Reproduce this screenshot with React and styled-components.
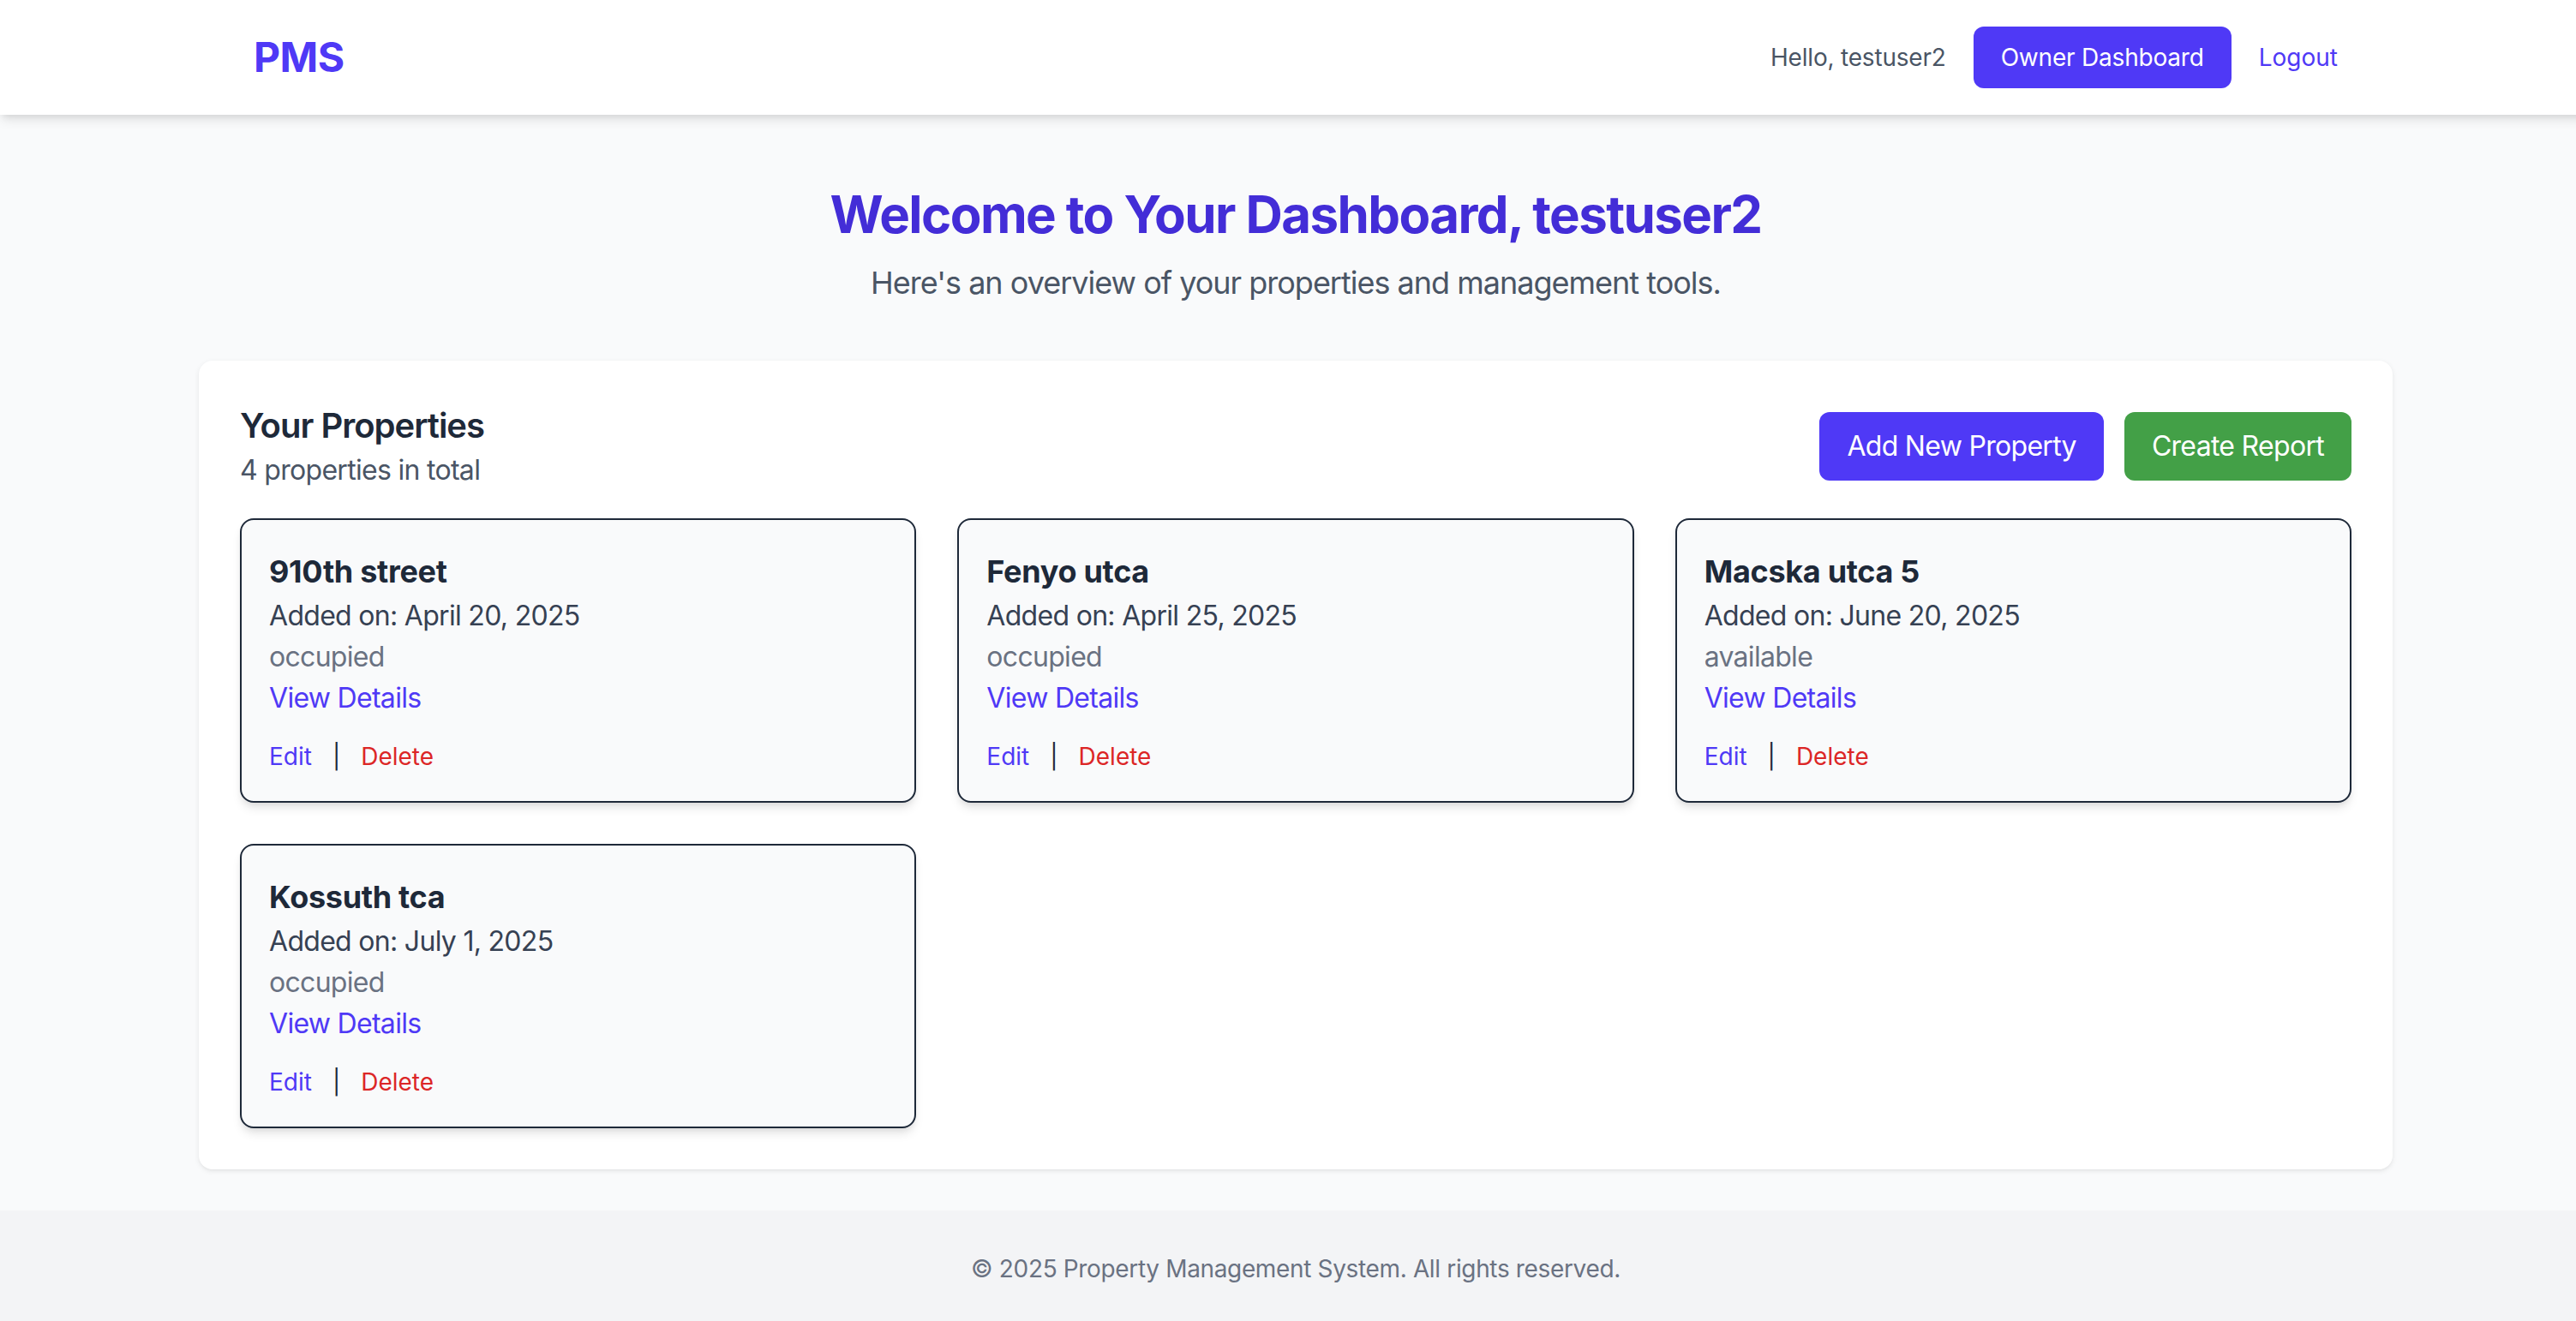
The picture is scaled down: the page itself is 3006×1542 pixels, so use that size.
import React from "react";
import styled, { createGlobalStyle } from "styled-components";

// The reference was captured from a 3024px wide layout and cropped to 3006px,
// so the page is laid out at 3024px and the overflow is hidden.
const GlobalStyle = createGlobalStyle`
  html, body {
    margin: 0;
    padding: 0;
    overflow: hidden;
  }
  body {
    font-family: Inter, "Noto Sans", "Liberation Sans", sans-serif;
    background-color: #f9fafb;
    color: #1e2939;
  }
  * {
    box-sizing: border-box;
  }
`;

const Page = styled.div`
  width: 3024px;
  min-height: 100vh;
  display: flex;
  flex-direction: column;
  background-color: #f9fafb;
`;

// Header
const Header = styled.header`
  background-color: #fff;
  box-shadow: 0 8px 12px -2px rgba(0, 0, 0, 0.1), 0 4px 8px -4px rgba(0, 0, 0, 0.1);
  position: relative;
  z-index: 1;
`;

const HeaderInner = styled.div`
  width: 2560px;
  margin: 0 auto;
  height: 134px;
  padding: 0 64px;
  display: flex;
  align-items: center;
  justify-content: space-between;
`;

const Logo = styled.div`
  font-size: 48px;
  line-height: 64px;
  font-weight: 700;
  letter-spacing: -0.5px;
  color: #4f39f6;
`;

const Nav = styled.nav`
  display: flex;
  align-items: center;
  gap: 32px;
`;

const Greeting = styled.span`
  font-size: 28px;
  line-height: 40px;
  letter-spacing: -0.2px;
  color: #4a5565;
`;

const NavButton = styled.button`
  font-family: inherit;
  font-size: 28px;
  line-height: 40px;
  letter-spacing: -0.2px;
  padding: 16px 32px;
  border: none;
  border-radius: 12px;
  background-color: #4f39f6;
  color: #fff;
  cursor: pointer;
`;

const NavLink = styled.a`
  font-size: 28px;
  line-height: 40px;
  color: #4f39f6;
  text-decoration: none;
  cursor: pointer;
`;

// Main
const Main = styled.main`
  flex: 1;
  padding: 80px 0 48px;
`;

const Intro = styled.section`
  text-align: center;
  margin-bottom: 63px;
`;

const Heading = styled.h1`
  margin: 0 0 16px;
  font-size: 60px;
  line-height: 72px;
  font-weight: 700;
  letter-spacing: -1.6px;
  color: #432dd7;
`;

const Subtitle = styled.p`
  margin: 0;
  font-size: 36px;
  line-height: 56px;
  letter-spacing: -1px;
  color: #4a5565;
`;

const Panel = styled.section`
  width: 2560px;
  margin: 0 auto;
  padding: 48px;
  background-color: #fff;
  border-radius: 16px;
  box-shadow: 0 2px 6px rgba(0, 0, 0, 0.08), 0 2px 4px -2px rgba(0, 0, 0, 0.06);
`;

const PanelHead = styled.div`
  display: flex;
  align-items: center;
  justify-content: space-between;
  margin-bottom: 32px;
`;

const PanelTitle = styled.h2`
  margin: 0;
  font-size: 40px;
  line-height: 56px;
  font-weight: 600;
  letter-spacing: -1px;
  color: #1e2939;
`;

const PanelCount = styled.p`
  margin: 0;
  font-size: 32px;
  line-height: 48px;
  letter-spacing: -0.7px;
  color: #4a5565;
`;

const Actions = styled.div`
  display: flex;
  gap: 24px;
`;

const ActionButton = styled.button`
  font-family: inherit;
  font-size: 32px;
  line-height: 48px;
  letter-spacing: -0.7px;
  padding: 16px 32px;
  border: none;
  border-radius: 12px;
  color: #fff;
  background-color: ${(p) => (p.$variant === "green" ? "#43a047" : "#4f39f6")};
  cursor: pointer;
`;

const Grid = styled.div`
  display: grid;
  grid-template-columns: repeat(3, 1fr);
  gap: 48px;
`;

const Card = styled.div`
  background-color: #f9fafb;
  border: 2px solid #1e2939;
  border-radius: 16px;
  padding: 32px;
  box-shadow: 0 8px 12px -2px rgba(0, 0, 0, 0.1), 0 4px 8px -4px rgba(0, 0, 0, 0.1);
`;

const CardTitle = styled.h3`
  margin: 0;
  font-size: 36px;
  line-height: 56px;
  font-weight: 700;
  letter-spacing: -0.3px;
  color: #1e2939;
`;

const CardLine = styled.p`
  margin: 0;
  font-size: 32px;
  line-height: 48px;
  letter-spacing: -0.7px;
  color: ${(p) => p.$color || "#364153"};
`;

const DetailsLink = styled.a`
  display: block;
  font-size: 32px;
  line-height: 48px;
  letter-spacing: -0.7px;
  color: #4f39f6;
  text-decoration: none;
`;

const CardActions = styled.div`
  margin-top: 24px;
  display: flex;
  align-items: center;
  font-size: 28px;
  line-height: 40px;
`;

const CardAction = styled.a`
  color: ${(p) => (p.$danger ? "#dc2626" : "#4f39f6")};
  text-decoration: none;
  cursor: pointer;
`;

const Divider = styled.span`
  margin: 0 24px;
  color: #1e2939;
`;

// Footer
const Footer = styled.footer`
  background-color: #f3f4f6;
  padding: 48px 0;
  text-align: center;
  font-size: 28px;
  line-height: 40px;
  letter-spacing: -0.35px;
  color: #6a7282;
`;

const properties = [
  { name: "910th street", added: "April 20, 2025", status: "occupied" },
  { name: "Fenyo utca", added: "April 25, 2025", status: "occupied" },
  { name: "Macska utca 5", added: "June 20, 2025", status: "available" },
  { name: "Kossuth tca", added: "July 1, 2025", status: "occupied" },
];

const PropertyCard = ({ property }) => (
  <Card>
    <CardTitle>{property.name}</CardTitle>
    <CardLine>Added on: {property.added}</CardLine>
    <CardLine $color="#6a7282">{property.status}</CardLine>
    <DetailsLink href="#">View Details</DetailsLink>
    <CardActions>
      <CardAction>Edit</CardAction>
      <Divider>|</Divider>
      <CardAction $danger>Delete</CardAction>
    </CardActions>
  </Card>
);

const App = () => {
  return (
    <Page>
      <GlobalStyle />
      <Header>
        <HeaderInner>
          <Logo>PMS</Logo>
          <Nav>
            <Greeting>Hello, testuser2</Greeting>
            <NavButton>Owner Dashboard</NavButton>
            <NavLink>Logout</NavLink>
          </Nav>
        </HeaderInner>
      </Header>

      <Main>
        <Intro>
          <Heading>Welcome to Your Dashboard, testuser2</Heading>
          <Subtitle>Here's an overview of your properties and management tools.</Subtitle>
        </Intro>

        <Panel>
          <PanelHead>
            <div>
              <PanelTitle>Your Properties</PanelTitle>
              <PanelCount>{properties.length} properties in total</PanelCount>
            </div>
            <Actions>
              <ActionButton>Add New Property</ActionButton>
              <ActionButton $variant="green">Create Report</ActionButton>
            </Actions>
          </PanelHead>
          <Grid>
            {properties.map((p) => (
              <PropertyCard key={p.name} property={p} />
            ))}
          </Grid>
        </Panel>
      </Main>

      <Footer>© 2025 Property Management System. All rights reserved.</Footer>
    </Page>
  );
};

export default App;
